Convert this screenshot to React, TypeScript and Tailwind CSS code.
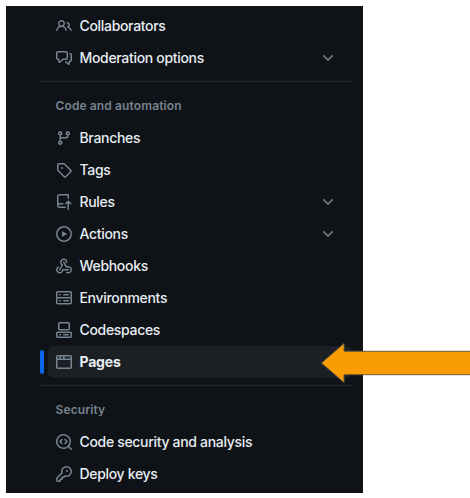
const ICONS = {
  people: "M2 5.5a3.5 3.5 0 1 1 5.898 2.549 5.508 5.508 0 0 1 3.034 4.084.75.75 0 1 1-1.482.235 4 4 0 0 0-7.9 0 .75.75 0 0 1-1.482-.236A5.507 5.507 0 0 1 3.102 8.05 3.493 3.493 0 0 1 2 5.5ZM11 4a3.001 3.001 0 0 1 2.22 5.018 5.01 5.01 0 0 1 2.56 3.012.749.749 0 0 1-.885.954.752.752 0 0 1-.549-.514 3.507 3.507 0 0 0-2.522-2.372.75.75 0 0 1-.574-.73v-.352a.75.75 0 0 1 .416-.672A1.5 1.5 0 0 0 11 5.5.75.75 0 0 1 11 4Zm-5.5-.5a2 2 0 1 0-.001 3.999A2 2 0 0 0 5.5 3.5Z",
  discussion: "M1.75 1h8.5c.966 0 1.75.784 1.75 1.75v5.5A1.75 1.75 0 0 1 10.25 10H7.061l-2.574 2.573A1.458 1.458 0 0 1 2 11.543V10h-.25A1.75 1.75 0 0 1 0 8.25v-5.5C0 1.784.784 1 1.75 1ZM1.5 2.75v5.5c0 .138.112.25.25.25h1a.75.75 0 0 1 .75.75v2.19l2.72-2.72a.749.749 0 0 1 .53-.22h3.5a.25.25 0 0 0 .25-.25v-5.5a.25.25 0 0 0-.25-.25h-8.5a.25.25 0 0 0-.25.25Zm13 2a.25.25 0 0 0-.25-.25h-.5a.75.75 0 0 1 0-1.5h.5c.966 0 1.75.784 1.75 1.75v5.5A1.75 1.75 0 0 1 14.25 12H14v1.543a1.458 1.458 0 0 1-2.487 1.03L9.22 12.28a.749.749 0 0 1 .326-1.275.749.749 0 0 1 .734.215l2.22 2.22v-2.19a.75.75 0 0 1 .75-.75h1a.25.25 0 0 0 .25-.25Z",
  branch: "M9.5 3.25a2.25 2.25 0 1 1 3 2.122V6A2.5 2.5 0 0 1 10 8.5H6a1 1 0 0 0-1 1v1.128a2.251 2.251 0 1 1-1.5 0V5.372a2.25 2.25 0 1 1 1.5 0v1.836A2.493 2.493 0 0 1 6 7h4a1 1 0 0 0 1-1v-.628A2.25 2.25 0 0 1 9.5 3.25Zm-6 0a.75.75 0 1 0 1.5 0 .75.75 0 0 0-1.5 0Zm8.25-.75a.75.75 0 1 0 0 1.5.75.75 0 0 0 0-1.5ZM4.25 12a.75.75 0 1 0 0 1.5.75.75 0 0 0 0-1.5Z",
  tag: "M1 7.775V2.75C1 1.784 1.784 1 2.75 1h5.025c.464 0 .91.184 1.238.513l6.25 6.25a1.75 1.75 0 0 1 0 2.474l-5.026 5.026a1.75 1.75 0 0 1-2.474 0l-6.25-6.25A1.752 1.752 0 0 1 1 7.775Zm1.5 0c0 .066.026.13.073.177l6.25 6.25a.25.25 0 0 0 .354 0l5.025-5.025a.25.25 0 0 0 0-.354l-6.25-6.25a.25.25 0 0 0-.177-.073H2.75a.25.25 0 0 0-.25.25ZM6 5a1 1 0 1 1 0 2 1 1 0 0 1 0-2Z",
  push: "M1 2.5A2.5 2.5 0 0 1 3.5 0h8.75a.75.75 0 0 1 .75.75v3.5a.75.75 0 0 1-1.5 0V1.5h-8a1 1 0 0 0-1 1v6.708A2.493 2.493 0 0 1 3.5 9h3.25a.75.75 0 0 1 0 1.5H3.5a1 1 0 0 0 0 2h5.75a.75.75 0 0 1 0 1.5H3.5A2.5 2.5 0 0 1 1 11.5Zm13.23 7.79-1.224-1.224v6.184a.75.75 0 0 1-1.5 0V9.066L10.28 10.29a.75.75 0 0 1-1.06-1.061l2.505-2.504a.75.75 0 0 1 1.06 0L15.29 9.23a.751.751 0 0 1-.018 1.042.751.751 0 0 1-1.042.018Z",
  play: "M8 0a8 8 0 1 1 0 16A8 8 0 0 1 8 0ZM1.5 8a6.5 6.5 0 1 0 13 0 6.5 6.5 0 0 0-13 0Zm4.879-2.773 4.264 2.559a.25.25 0 0 1 0 .428l-4.264 2.559A.25.25 0 0 1 6 10.559V5.442a.25.25 0 0 1 .379-.215Z",
  webhook: "M5.5 4.25a2.25 2.25 0 0 1 4.5 0 .75.75 0 0 0 1.5 0 3.75 3.75 0 1 0-6.14 2.889l-2.272 4.258a.75.75 0 0 0 1.324.706L7 7.25a.75.75 0 0 0-.309-1.015A2.25 2.25 0 0 1 5.5 4.25Z M7.364 3.607a.75.75 0 0 1 1.03.257l2.608 4.349a3.75 3.75 0 1 1-.628 6.785.75.75 0 0 1 .752-1.299 2.25 2.25 0 1 0-.033-3.88.75.75 0 0 1-1.03-.256L7.107 4.636a.75.75 0 0 1 .257-1.03Z M2.9 8.776A.75.75 0 0 1 2.625 9.8 2.25 2.25 0 1 0 6 11.75a.75.75 0 0 1 .75-.751h5.5a.75.75 0 0 1 0 1.5H7.425a3.751 3.751 0 1 1-5.55-3.998.75.75 0 0 1 1.024.274Z",
  server: "M1.75 1h12.5c.966 0 1.75.784 1.75 1.75v4c0 .372-.116.717-.314 1 .198.283.314.628.314 1v4a1.75 1.75 0 0 1-1.75 1.75H1.75A1.75 1.75 0 0 1 0 12.75v-4c0-.358.109-.707.314-1a1.739 1.739 0 0 1-.314-1v-4C0 1.784.784 1 1.75 1ZM1.5 2.75v4c0 .138.112.25.25.25h12.5a.25.25 0 0 0 .25-.25v-4a.25.25 0 0 0-.25-.25H1.75a.25.25 0 0 0-.25.25Zm.25 5.75a.25.25 0 0 0-.25.25v4c0 .138.112.25.25.25h12.5a.25.25 0 0 0 .25-.25v-4a.25.25 0 0 0-.25-.25ZM7 4.75A.75.75 0 0 1 7.75 4h4.5a.75.75 0 0 1 0 1.5h-4.5A.75.75 0 0 1 7 4.75ZM7.75 10h4.5a.75.75 0 0 1 0 1.5h-4.5a.75.75 0 0 1 0-1.5ZM3 4.75A.75.75 0 0 1 3.75 4h.5a.75.75 0 0 1 0 1.5h-.5A.75.75 0 0 1 3 4.75ZM3.75 10h.5a.75.75 0 0 1 0 1.5h-.5a.75.75 0 0 1 0-1.5Z",
  codespaces: "M0 11.25c0-.966.784-1.75 1.75-1.75h12.5c.966 0 1.75.784 1.75 1.75v3A1.75 1.75 0 0 1 14.25 16H1.75A1.75 1.75 0 0 1 0 14.25Zm2-9.5C2 .784 2.784 0 3.75 0h8.5C13.216 0 14 .784 14 1.75v5a1.75 1.75 0 0 1-1.75 1.75h-8.5A1.75 1.75 0 0 1 2 6.75Zm1.75-.25a.25.25 0 0 0-.25.25v5c0 .138.112.25.25.25h8.5a.25.25 0 0 0 .25-.25v-5a.25.25 0 0 0-.25-.25Zm-2 9.5a.25.25 0 0 0-.25.25v3c0 .138.112.25.25.25h12.5a.25.25 0 0 0 .25-.25v-3a.25.25 0 0 0-.25-.25Z M7 12.75a.75.75 0 0 1 .75-.75h4.5a.75.75 0 0 1 0 1.5h-4.5a.75.75 0 0 1-.75-.75Zm-4 0a.75.75 0 0 1 .75-.75h.5a.75.75 0 0 1 0 1.5h-.5a.75.75 0 0 1-.75-.75Z",
  browser: "M0 2.75C0 1.784.784 1 1.75 1h12.5c.966 0 1.75.784 1.75 1.75v10.5A1.75 1.75 0 0 1 14.25 15H1.75A1.75 1.75 0 0 1 0 13.25ZM14.5 6h-13v7.25c0 .138.112.25.25.25h12.5a.25.25 0 0 0 .25-.25Zm-6-3.5v2h6V2.75a.25.25 0 0 0-.25-.25ZM5 2.5v2h2v-2Zm-3.25 0a.25.25 0 0 0-.25.25V4.5h2v-2Z",
  codescan: "M8.47 4.97a.75.75 0 0 0 0 1.06L9.94 7.5 8.47 8.97a.75.75 0 1 0 1.06 1.06l2-2a.75.75 0 0 0 0-1.06l-2-2a.75.75 0 0 0-1.06 0ZM6.53 6.03a.75.75 0 0 0-1.06-1.06l-2 2a.75.75 0 0 0 0 1.06l2 2a.75.75 0 1 0 1.06-1.06L5.06 7.5l1.47-1.47Z M12.246 13.307a7.501 7.501 0 1 1 1.06-1.06l2.474 2.473a.749.749 0 0 1-.326 1.275.749.749 0 0 1-.734-.215ZM1.5 7.5a6.002 6.002 0 0 0 3.608 5.504 6.002 6.002 0 0 0 6.486-1.117.748.748 0 0 1 .292-.293A6 6 0 1 0 1.5 7.5Z",
  key: "M10.5 0a5.499 5.499 0 1 1-1.288 10.848l-.932.932a.749.749 0 0 1-.53.22H7v.75a.749.749 0 0 1-.22.53l-.5.5a.749.749 0 0 1-.53.22H5v.75a.749.749 0 0 1-.22.53l-.5.5a.749.749 0 0 1-.53.22h-2A1.75 1.75 0 0 1 0 14.25v-2c0-.199.079-.389.22-.53l4.932-4.932A5.5 5.5 0 0 1 10.5 0Zm-4 5.5c-.001.431.069.86.205 1.269a.75.75 0 0 1-.181.768L1.5 12.56v1.69c0 .138.112.25.25.25h1.69l.06-.06v-1.19a.75.75 0 0 1 .75-.75h1.19l.06-.06v-1.19a.75.75 0 0 1 .75-.75h1.19l1.023-1.025a.75.75 0 0 1 .768-.18A4 4 0 1 0 6.5 5.5ZM11 6a1 1 0 1 1 0-2 1 1 0 0 1 0 2Z",
  chevron: "M12.78 5.22a.749.749 0 0 1 0 1.06l-4.25 4.25a.749.749 0 0 1-1.06 0L3.22 6.28a.749.749 0 1 1 1.06-1.06L8 8.939l3.72-3.719a.749.749 0 0 1 1.06 0Z",
};

type IconName = keyof typeof ICONS;

function Icon({ name }: { name: IconName }) {
  return (
    <svg viewBox="0 0 16 16" className="size-4 shrink-0 fill-[#768390]" aria-hidden="true">
      <path d={ICONS[name]} />
    </svg>
  );
}

interface ItemProps {
  icon: IconName;
  label: string;
  expandable?: boolean;
  active?: boolean;
}

function Item({ icon, label, expandable, active }: ItemProps) {
  return (
    <li className="flex h-8 items-center">
      <span className={active ? "mr-1 h-6 w-1 rounded-md bg-[#0969e8]" : "mr-1 h-6 w-1"} />
      <a
        className={
          active
            ? "flex h-8 grow items-center gap-[7.5px] rounded-md bg-[#1c2025] pr-4 pl-2 font-bold tracking-[-0.2px]"
            : "flex h-8 grow items-center gap-[7.5px] rounded-md pr-4 pl-2 font-medium tracking-[-0.32px]"
        }
      >
        <Icon name={icon} />
        <span className="grow">{label}</span>
        {expandable && <Icon name="chevron" />}
      </a>
    </li>
  );
}

function Heading({ children }: { children: string }) {
  return (
    <h3 className="mt-[14px] mb-[6px] pl-[15.5px] text-xs leading-5 font-semibold tracking-[0.12px] text-[#768390]">
      {children}
    </h3>
  );
}

function Divider() {
  return <hr className="mt-[7px] h-px border-0 bg-[#24292e]" />;
}

export default function App() {
  return (
    <div className="relative h-[498px] w-[470px] overflow-hidden bg-white p-1.5 font-['Inter','Liberation_Sans',sans-serif]">
      <nav className="h-[487px] w-[357px] overflow-hidden bg-[#0f1317] pt-1 pr-[11px] pl-[34px] text-sm leading-5 text-[#e6edf3]">
        <ul>
          <Item icon="people" label="Collaborators" />
          <Item icon="discussion" label="Moderation options" expandable />
        </ul>
        <Divider />
        <Heading>Code and automation</Heading>
        <ul>
          <Item icon="branch" label="Branches" />
          <Item icon="tag" label="Tags" />
          <Item icon="push" label="Rules" expandable />
          <Item icon="play" label="Actions" expandable />
          <Item icon="webhook" label="Webhooks" />
          <Item icon="server" label="Environments" />
          <Item icon="codespaces" label="Codespaces" />
          <Item icon="browser" label="Pages" active />
        </ul>
        <Divider />
        <Heading>Security</Heading>
        <ul>
          <Item icon="codescan" label="Code security and analysis" />
          <Item icon="key" label="Deploy keys" />
        </ul>
      </nav>
      <svg
        viewBox="0 0 150 42"
        className="absolute top-[342px] left-[320px] h-[42px] w-[150px]"
        aria-hidden="true"
      >
        <path
          d="M1.5 21 24 1.5V9.3H152V32.7H24V40.5Z"
          fill="#fa9d05"
          stroke="#6b5a3c"
          strokeWidth="1"
        />
      </svg>
    </div>
  );
}
